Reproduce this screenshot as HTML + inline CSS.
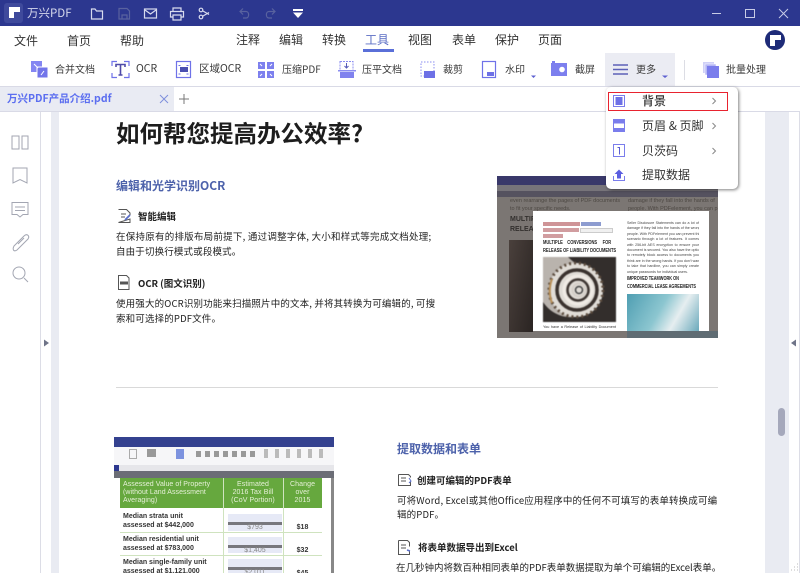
<!DOCTYPE html>
<html><head><meta charset="utf-8">
<style>
html,body{margin:0;padding:0;background:#fff}
body{width:800px;height:573px;position:relative;overflow:hidden;font-family:"Noto Sans CJK SC","Liberation Sans",sans-serif;color:#333}
.a{position:absolute}
.t{position:absolute;white-space:nowrap;line-height:16px;font-size:10px;color:#3a3a3a}
.m{font-size:12px;color:#333}
.p{font-size:9.5px;letter-spacing:.15px;color:#222;line-height:14px}
.h{font-size:12px;color:#4d62ab;font-weight:700;line-height:16px}
.s{font-size:9.500px;color:#222;font-weight:700;line-height:14px}
svg{position:absolute;overflow:visible}
.j{position:absolute;left:94px;width:72px;height:5.400px;overflow:hidden;font-family:"Liberation Sans",sans-serif;font-size:3.600px;line-height:5.400px;color:#444;text-align:justify;text-align-last:justify;white-space:nowrap}
</style></head><body>
<!-- title bar -->
<div class="a" style="left:0;top:0;width:800px;height:26px;background:#2c378f"></div>
<div class="a" style="left:4px;top:3px;width:19px;height:20px;background:#3f4a9c;border-radius:3px"></div>
<svg style="left:8px;top:6px" width="12" height="14"><path d="M1 1h11v5H6v6H1z" fill="#fff"/></svg>
<span class="t" style="left:27px;top:5px;color:#d5d8ec;font-size:11.500px">万兴PDF</span>
<svg style="left:0;top:0" width="400" height="26" fill="none" stroke="#d8dbee" stroke-width="1.200">
<path d="M91.500 9v10h11V11h-6l-1.500-2z"/>
<path d="M119 8.500h8l2.500 2.500v8h-10.500zM122 19v-4h5v4" stroke="#59629f"/>
<rect x="144.500" y="9" width="12" height="9"/><path d="M145 10l5.500 4 5.500-4"/>
<path d="M173 12V8h8v4M173 17h-2.500v-5.500h13V17H181M173 15h8v5h-8z"/>
<circle cx="201" cy="10" r="1.800"/><circle cx="201" cy="17" r="1.800"/><path d="M203 11l6 3.500M203 16l6-3.500"/>
<path d="M243 8.500l-3 3 3 3M240 11.500h6c3.500 0 3.500 6.500 0 6.500h-3" stroke="#59629f"/>
<path d="M272 8.500l3 3-3 3M275 11.500h-6c-3.500 0-3.500 6.500 0 6.500h3" stroke="#59629f"/>
</svg>
<svg style="left:293px;top:9px" width="10" height="9"><rect width="10" height="2" fill="#fff"/><path d="M0 3.500h10L5 9z" fill="#fff"/></svg>
<div class="a" style="left:712px;top:13px;width:9px;height:1px;background:#c8cce6"></div>
<div class="a" style="left:745px;top:9px;width:8px;height:7px;border:1px solid #c8cce6"></div>
<svg style="left:779px;top:9px" width="9" height="9" stroke="#c8cce6"><path d="M0 0l9 9M9 0L0 9"/></svg>

<!-- menu -->
<span class="t m" style="left:14px;top:33px">文件</span>
<span class="t m" style="left:67px;top:33px">首页</span>
<span class="t m" style="left:120px;top:33px">帮助</span>
<span class="t m" style="left:236px;top:32px">注释</span>
<span class="t m" style="left:279px;top:32px">编辑</span>
<span class="t m" style="left:322px;top:32px">转换</span>
<span class="t m" style="left:365px;top:32px;color:#5b6ec4">工具</span>
<div class="a" style="left:363px;top:49px;width:31px;height:2.500px;background:#5a6fd8"></div>
<span class="t m" style="left:408px;top:32px">视图</span>
<span class="t m" style="left:452px;top:32px">表单</span>
<span class="t m" style="left:495px;top:32px">保护</span>
<span class="t m" style="left:538px;top:32px">页面</span>
<svg style="left:765px;top:30px" width="20" height="20"><circle cx="10" cy="10" r="10" fill="#1e2b78"/><path d="M5 5h11v5h-6v6H5z" fill="#fff"/></svg>

<!-- toolbar -->
<div class="a" style="left:605px;top:53px;width:70px;height:33px;background:#ebecf3"></div>
<div class="a" style="left:684px;top:60px;width:1px;height:20px;background:#dcdde4"></div>
<span class="t" style="left:55px;top:61px">合并文档</span>
<span class="t" style="left:136px;top:61px;font-size:10.500px">OCR</span>
<span class="t" style="left:199px;top:61px;font-size:10.500px">区域OCR</span>
<span class="t" style="left:282px;top:61px">压缩PDF</span>
<span class="t" style="left:362px;top:61px">压平文档</span>
<span class="t" style="left:443px;top:61px">裁剪</span>
<span class="t" style="left:505px;top:61px">水印</span>
<span class="t" style="left:575px;top:61px">截屏</span>
<span class="t" style="left:636px;top:61px">更多</span>
<span class="t" style="left:726px;top:61px">批量处理</span>
<svg style="left:0;top:0" width="800" height="86" fill="none">
<rect x="31" y="61" width="11" height="11" fill="#8486f2"/><rect x="37" y="67" width="11" height="11" fill="#7275ea" stroke="#fff"/>
<path d="M34 64l4 4M41 75l3-4" stroke="#fff"/>
<path d="M112 66v-4.500h5M124 61.500h5V66M112 73v4.500h5M124 77.500h5V73" stroke="#6f72e8" stroke-width="1.200"/>
<path d="M116 67v-2.500h9V67M120.500 64.500V75M118.500 75h4" stroke="#4f4ba8" stroke-width="1.600"/>
<rect x="176.500" y="61.500" width="14" height="16" stroke="#6f72e8" stroke-width="1.200"/>
<rect x="180" y="67" width="8" height="5" fill="#4a4fb0"/><path d="M178.500 65.500h2M186.500 65.500h2M178.500 74h2M186.500 74h2" stroke="#6f72e8"/>
<rect x="258" y="62" width="7" height="7" fill="#7d80ee"/><rect x="267" y="62" width="7" height="7" fill="#7d80ee"/><rect x="258" y="71" width="7" height="7" fill="#7d80ee"/><rect x="267" y="71" width="7" height="7" fill="#7d80ee"/>
<path d="M260 64l2 2M272 64l-2 2M260 76l2-2M272 76l-2-2" stroke="#fff"/>
<rect x="340" y="61.500" width="13" height="9" stroke="#8a8cf0" stroke-dasharray="2 1"/>
<path d="M346.500 63v5m-2-2l2 2 2-2" stroke="#555ab8"/>
<rect x="338" y="70" width="18" height="1.500" fill="#8a8cf0"/><rect x="340" y="72" width="14" height="6" fill="#8082ee"/>
<rect x="421" y="62" width="13" height="14" stroke="#8a8cf0" stroke-dasharray="1.500 1.500"/><rect x="424" y="71" width="11" height="7" fill="#6d70e6"/>
<rect x="482.500" y="61.500" width="13" height="16" stroke="#6f72e8" stroke-width="1.200"/><rect x="487" y="72" width="7" height="4" fill="#6d70e6"/>
<path d="M531 75.500h5l-2.500 2.500z" fill="#5c5fd0"/>
<rect x="551" y="63" width="16" height="13" fill="#7c7fee"/><path d="M552 61h3v2h-3z" fill="#7c7fee"/><circle cx="562" cy="69.500" r="2.800" fill="#fff"/>
<path d="M613 65h15M613 69.500h15M613 74h15" stroke="#5c60b8" stroke-width="1.500"/>
<path d="M662 75.500h6l-3 2.500z" fill="#5c5fd0"/>
<rect x="703" y="62" width="11" height="11" fill="#cfd0f7"/><rect x="705" y="64" width="11" height="11" fill="#b5b7f5" stroke="#fff" stroke-width=".5"/><rect x="707" y="66" width="12" height="12" fill="#7a7dec"/>
</svg>
<div class="a" style="left:0;top:86px;width:800px;height:1px;background:#d9dae6"></div>

<!-- tab bar -->
<div class="a" style="left:0;top:87px;width:174px;height:24px;background:#e9ebf3"></div>
<span class="t" style="left:7px;top:91px;font-size:10.500px;color:#5b6ef0;font-weight:700">万兴PDF产品介绍.pdf</span>
<svg style="left:160px;top:95px" width="8" height="8" stroke="#7f90dc"><path d="M0 0l8 8M8 0L0 8"/></svg>
<svg style="left:179px;top:94px" width="10" height="10" stroke="#777"><path d="M5 0v10M0 5h10"/></svg>
<div class="a" style="left:0;top:111px;width:800px;height:1px;background:#d9dae6"></div>

<!-- side -->
<div class="a" style="left:40px;top:112px;width:1px;height:461px;background:#dcdde6"></div>
<div class="a" style="left:51px;top:112px;width:8px;height:461px;background:#e9ebf2"></div>
<div class="a" style="left:765px;top:112px;width:24px;height:461px;background:#e9ebf2"></div>
<div class="a" style="left:799px;top:112px;width:1px;height:461px;background:#dcdde6"></div>
<div class="a" style="left:778px;top:408px;width:7px;height:28px;background:#a5a8bb;border-radius:3.500px"></div>
<svg style="left:0;top:0" width="800" height="573" fill="none" stroke="#a3a6b2" stroke-width="1">
<rect x="12" y="136" width="7" height="13"/><rect x="22" y="136" width="6" height="13"/>
<path d="M13 168h14v15l-7-3.500-7 3.500z"/>
<path d="M12 202.500h16v12h-5l-3 2.500-3-2.500h-5zM15 207h10M15 210.500h10"/>
<path d="M14 246l10-10c3-3 6 0 4 3l-11 11c-3 2-5 0-3-4zM18 244l6-6"/>
<circle cx="19" cy="273" r="6"/><path d="M24 278l4 4"/>
<path d="M44 339.500l5 3.500-5 3.500z" fill="#6f7488" stroke="none"/>
<path d="M796 339.500l-5 3.500 5 3.500z" fill="#6f7488" stroke="none"/>
<path d="M797 570h1M794 570h1M797 567h1M794 567h1M797 564h1M791 570h1" stroke="#bbb"/>
</svg>

<!-- page: section 1 -->
<span class="t" style="left:116px;top:117px;font-size:23.500px;font-weight:700;color:#1d1d1d;line-height:30px">如何帮您提高办公效率?</span>
<span class="t h" style="left:116px;top:178px">编辑和光学识别OCR</span>
<span class="t s" style="left:138px;top:209px">智能编辑</span>
<span class="t p" style="left:116px;top:229px;letter-spacing:.24px">在保持原有的排版布局前提下, 通过调整字体, 大小和样式等完成文档处理;</span>
<span class="t p" style="left:116px;top:244px">自由于切换行模式或段模式。</span>
<span class="t s" style="left:138px;top:276px">OCR (图文识别)</span>
<span class="t p" style="left:116px;top:296px">使用强大的OCR识别功能来扫描照片中的文本, 并将其转换为可编辑的, 可搜</span>
<span class="t p" style="left:116px;top:311px">索和可选择的PDF文件。</span>
<svg style="left:0;top:0" width="800" height="573" fill="none" stroke="#555" stroke-width="1">
<path d="M118.500 209.500h8l3.500 3.500v2M130 219v3.500h-11.500zM121 214h5M121 217h4"/>
<path d="M125 220l5-5" stroke="#5a6ec8" stroke-width="1.800"/>
<path d="M118.500 275.500h8l2.500 2.500v11.500h-10.500z"/>
<rect x="120" y="281.500" width="8" height="3" fill="#555" stroke="none"/>
<path d="M398.500 474.500h10l2 2v1M410.500 482v3.500h-12v-11M401 478h5M401 481h5"/>
<path d="M409 478l2 3-2 2" stroke="#5a6ec8"/>
<path d="M398.500 540.500h9l2 2v4M409.500 551v3.500h-11v-14M401 545h5M401 548h5"/>
<path d="M407 550l3 1" stroke="#5a6ec8" stroke-width="1.500"/>
</svg>
<div class="a" style="left:116px;top:387px;width:602px;height:1px;background:#d9d9d9"></div>

<!-- image 1 -->
<div class="a" style="left:497px;top:176px;width:221px;height:162px;background:#7b7673;overflow:hidden;font-family:'Liberation Sans',sans-serif">
 <div class="a" style="left:0;top:0;width:221px;height:9px;background:#39386a"></div>
 <div class="a" style="left:0;top:9px;width:221px;height:6px;background:#77747a"></div>
 <div class="a" style="left:0;top:15px;width:221px;height:6px;background:#55525f"></div>
 <span class="a" style="left:13px;top:21px;font-size:5.500px;color:#4d4843;white-space:nowrap;line-height:8px">even rearrange the pages of PDF documents</span>
 <span class="a" style="left:13px;top:29px;font-size:5.500px;color:#4d4843;white-space:nowrap;line-height:8px">to fit your specific needs.</span>
 <span class="a" style="left:13px;top:39px;font-size:7px;font-weight:700;color:#33302e;white-space:nowrap;line-height:10px">MULTIPLE<br>RELEASE</span>
 <span class="a" style="left:131px;top:21px;font-size:5.500px;color:#4d4843;white-space:nowrap;line-height:8px">damage if they fall into the hands of<br>people. With PDFelement, you can prevent</span>
 <div class="a" style="left:12px;top:64px;width:24px;height:92px;background:linear-gradient(100deg,#4a403c,#2a2422)"></div>
 <div class="a" style="left:130px;top:155px;width:91px;height:7px;background:#5f6c73"></div>
</div>
<div class="a" style="left:533px;top:211px;width:176px;height:120px;background:#fff;overflow:hidden;font-family:'Liberation Sans',sans-serif">
 <div class="a" style="left:10px;top:11px;width:37px;height:3.500px;background:#cf9497"></div>
 <div class="a" style="left:48px;top:11px;width:20px;height:3.500px;background:#8d9cd0"></div>
 <div class="a" style="left:10px;top:17px;width:36px;height:3.500px;background:#d19da0"></div>
 <div class="a" style="left:10px;top:23px;width:20px;height:3.500px;background:#d19da0"></div>
 <div class="a" style="left:47px;top:17px;width:33px;height:5px;background:#f0f0f0;border:.5px solid #ccc;box-sizing:border-box"></div>
 <span class="a" style="left:10px;top:28px;width:100px;font-size:5.600px;line-height:8px;font-weight:700;color:#222;transform:scaleX(.72);transform-origin:0 0;white-space:nowrap">MULTIPLE &nbsp;&nbsp; CONVERSIONS &nbsp;&nbsp;&nbsp; FOR<br>RELEASE OF LIABILITY DOCUMENTS</span>
 <svg style="left:10px;top:46px;filter:blur(.4px)" width="73" height="65" viewBox="0 0 73 65" fill="none">
  <rect width="73" height="65" fill="#b9b3ad"/>
  <path d="M73 0v65H0V45c10 15 30 20 45 10 15-10 14-30 0-40C35 8 30 5 25 0z" fill="#332e2c"/>
  <circle cx="33" cy="33" r="27" fill="#e0dcd6"/>
  <circle cx="33" cy="33" r="27" stroke="#5a4a3c" stroke-width="3" stroke-dasharray="2 3"/>
  <circle cx="34" cy="33" r="20" stroke="#3a322e" stroke-width="3.500"/>
  <circle cx="35" cy="33" r="14" stroke="#efeae4" stroke-width="3"/>
  <circle cx="35" cy="33" r="10.500" stroke="#3e3632" stroke-width="2.500"/>
  <circle cx="36" cy="33" r="6.500" stroke="#d5cfc8" stroke-width="2"/>
  <circle cx="36" cy="33" r="3.500" stroke="#444" stroke-width="1.500"/>
  <path d="M9 22c-3 8-3 16 0 24" stroke="#b88e55" stroke-width="2"/>
 </svg>
 <span class="a" style="left:10px;top:113px;width:73px;font-size:3.800px;line-height:6px;color:#333;white-space:nowrap;text-align:justify;text-align-last:justify">You have a Release of Liability Document</span>
 <div class="j" style="top:10px">Seller Disclosure Statements can do a lot of</div>
 <div class="j" style="top:15.400px">damage if they fall into the hands of the wrong</div>
 <div class="j" style="top:20.800px">people. With PDFelement you can prevent this</div>
 <div class="j" style="top:26.200px">scenario through a lot of features. It comes</div>
 <div class="j" style="top:31.600px">with 256-bit AES encryption to ensure your</div>
 <div class="j" style="top:37px">document is secured. You also have the option</div>
 <div class="j" style="top:42.400px">to remotely block access to documents you</div>
 <div class="j" style="top:47.800px">think are in the wrong hands. If you don't want</div>
 <div class="j" style="top:53.200px">to take that hardline, you can simply create</div>
 <div class="j" style="top:58.600px;text-align-last:left">unique passwords for individual users.</div>
 <span class="a" style="left:94px;top:65px;font-size:5.400px;line-height:7.700px;font-weight:700;color:#222;white-space:nowrap;transform:scaleX(.72);transform-origin:0 0">IMPROVED TEAMWORK ON<br>COMMERCIAL LEASE AGREEMENTS</span>
 <div class="a" style="left:94px;top:83px;width:72px;height:37px;background:linear-gradient(120deg,#4f9eb2,#8cc6d0 45%,#e6eef0 68%,#6aa9bb)"></div>
</div>

<!-- image 2 -->
<div class="a" style="left:114px;top:437px;width:220px;height:136px;background:#fff;overflow:hidden;font-family:'Liberation Sans',sans-serif">
 <div class="a" style="left:0;top:0;width:220px;height:10px;background:#34418f"></div>
 <div class="a" style="left:0;top:10px;width:220px;height:18px;background:#f6f6f8"></div>
 <div class="a" style="left:15px;top:12px;width:6px;height:8px;border:1px solid #aaa"></div>
 <div class="a" style="left:33px;top:12px;width:9px;height:8px;background:#999"></div>
 <div class="a" style="left:62px;top:12px;width:8px;height:10px;background:#7d93df"></div>
 <div class="a" style="left:82px;top:14px;width:62px;height:6px;background:repeating-linear-gradient(90deg,#999 0 5px,#f6f6f8 5px 9px)"></div>
 <div class="a" style="left:150px;top:12px;width:60px;height:9px;background:repeating-linear-gradient(90deg,#bbb 0 4px,#f6f6f8 4px 11px)"></div>
 <div class="a" style="left:0;top:28px;width:220px;height:6px;background:#e6e6ea"></div>
 <div class="a" style="left:0;top:28px;width:5px;height:6px;background:#2c378f"></div>
 <div class="a" style="left:0;top:34px;width:220px;height:7px;background:#6b6d76"></div>
 <div class="a" style="left:217px;top:41px;width:3px;height:95px;background:#888"></div>
 <div class="a" style="left:6px;top:41px;width:202px;height:30px;background:#66a83e"></div>
 <span class="a" style="left:9px;top:43.500px;font-size:7px;letter-spacing:.05px;line-height:8.400px;color:#e6f0d8;white-space:nowrap">Assessed Value of Property<br>(without Land Assessment<br>Averaging)</span>
 <span class="a" style="left:109px;top:43.500px;width:60px;font-size:7px;letter-spacing:.1px;line-height:8.400px;color:#e6f0d8;text-align:center">Estimated<br>2016 Tax Bill<br>(CoV Portion)</span>
 <span class="a" style="left:169px;top:43.500px;width:39px;font-size:7px;letter-spacing:.1px;line-height:8.400px;color:#e6f0d8;text-align:center">Change<br>over<br>2015</span>
 <div class="a" style="left:109px;top:41px;width:1px;height:95px;background:#cfe3bf"></div>
 <div class="a" style="left:169px;top:41px;width:1px;height:95px;background:#cfe3bf"></div>
 <div class="a" style="left:6px;top:95px;width:202px;height:1px;background:#cfe3bf"></div>
 <div class="a" style="left:6px;top:118px;width:202px;height:1px;background:#cfe3bf"></div>
 <span class="a" style="left:9px;top:76px;font-size:7px;line-height:8.600px;font-weight:700;color:#333;white-space:nowrap">Median strata unit<br>assessed at $442,000</span>
 <span class="a" style="left:9px;top:99px;font-size:7px;line-height:8.600px;font-weight:700;color:#333;white-space:nowrap">Median residential unit<br>assessed at $783,000</span>
 <span class="a" style="left:9px;top:122px;font-size:7px;line-height:8.600px;font-weight:700;color:#333;white-space:nowrap">Median single-family unit<br>assessed at $1,121,000</span>
 <div class="a" style="left:114px;top:77px;width:54px;height:17px;background:#e6e9f6"></div>
 <div class="a" style="left:114px;top:100px;width:54px;height:16px;background:#e6e9f6"></div>
 <div class="a" style="left:114px;top:122px;width:54px;height:14px;background:#e6e9f6"></div>
 <div class="a" style="left:114px;top:85px;width:54px;height:3px;background:#77777d"></div>
 <div class="a" style="left:114px;top:108px;width:54px;height:3px;background:#77777d"></div>
 <div class="a" style="left:114px;top:130px;width:54px;height:3px;background:#77777d"></div>
 <span class="a" style="left:114px;top:86px;width:54px;text-align:center;font-size:7px;line-height:9px;color:#888">$793</span>
 <span class="a" style="left:114px;top:109px;width:54px;text-align:center;font-size:7px;line-height:9px;color:#888">$1,405</span>
 <span class="a" style="left:114px;top:131px;width:54px;text-align:center;font-size:7px;line-height:9px;color:#888">$2,011</span>
 <span class="a" style="left:169px;top:86px;width:39px;text-align:center;font-size:7px;line-height:9px;font-weight:700;color:#333">$18</span>
 <span class="a" style="left:169px;top:109px;width:39px;text-align:center;font-size:7px;line-height:9px;font-weight:700;color:#333">$32</span>
 <span class="a" style="left:169px;top:132px;width:39px;text-align:center;font-size:7px;line-height:9px;font-weight:700;color:#333">$45</span>
</div>

<!-- section 2 -->
<span class="t h" style="left:397px;top:441px">提取数据和表单</span>
<span class="t s" style="left:417px;top:473px">创建可编辑的PDF表单</span>
<span class="t p" style="left:397px;top:493px">可将Word, Excel或其他Office应用程序中的任何不可填写的表单转换成可编</span>
<span class="t p" style="left:397px;top:507px">辑的PDF。</span>
<span class="t s" style="left:418px;top:540px">将表单数据导出到Excel</span>
<span class="t p" style="left:396px;top:560px;letter-spacing:0">在几秒钟内将数百种相同表单的PDF表单数据提取为单个可编辑的Excel表单。</span>

<!-- dropdown -->
<div class="a" style="left:606px;top:87px;width:132px;height:102px;background:#fff;border-radius:5px;box-shadow:1px 1px 3px rgba(0,0,0,.5)"></div>
<div class="a" style="left:608px;top:92px;width:120px;height:19px;border:1.500px solid #e8232f;box-sizing:border-box"></div>
<span class="t" style="left:642px;top:93px;font-size:12px;font-weight:500;color:#333">背景</span>
<span class="t" style="left:642px;top:118px;font-size:12px;color:#333">页眉 &amp; 页脚</span>
<span class="t" style="left:642px;top:143px;font-size:12px;color:#333">贝茨码</span>
<span class="t" style="left:642px;top:167px;font-size:12px;color:#333">提取数据</span>
<svg style="left:0;top:0" width="800" height="200" fill="none">
<rect x="613.500" y="95.500" width="11" height="11" stroke="#7a7dec"/><rect x="615.500" y="97" width="7" height="8" fill="#6d70e6"/>
<rect x="613.500" y="119.500" width="11" height="12" stroke="#7a7dec"/><rect x="614" y="120" width="10" height="3.500" fill="#7a7dec"/><rect x="614" y="128" width="10" height="3.500" fill="#7a7dec"/>
<rect x="613.500" y="144.500" width="11" height="12" stroke="#7a7dec"/><path d="M617.500 147.500h2v7" stroke="#5a5dd0"/>
<path d="M613.500 176v4.500h11V176" stroke="#7a7dec"/><path d="M619 169.500l-4.500 4.500h2.500v4.500h4V174h2.500z" fill="#5b5ee0"/>
<path d="M712.500 98l3 3-3 3M712.500 123l3 3-3 3M712.500 148l3 3-3 3" stroke="#888"/>
</svg>
</body></html>
